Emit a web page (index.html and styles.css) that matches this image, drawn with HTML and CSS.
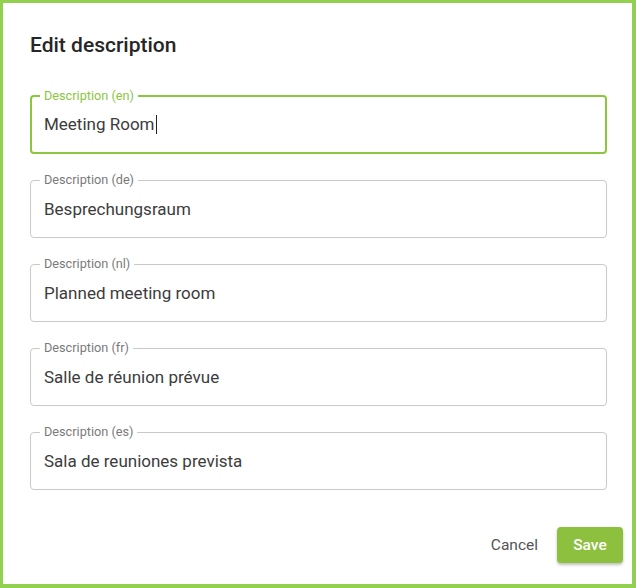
FILE: index.html
```html
<!DOCTYPE html>
<html lang="en">
<head>
<meta charset="utf-8">
<title>Edit description</title>
<link rel="stylesheet" href="styles.css">
</head>
<body>
<div class="dialog">
  <h1 class="title">Edit description</h1>
  <div class="fields">
    <fieldset class="field focused">
      <legend>Description (en)</legend>
      <div class="value">Meeting Room<span class="caret"></span></div>
    </fieldset>
    <fieldset class="field">
      <legend>Description (de)</legend>
      <div class="value">Besprechungsraum</div>
    </fieldset>
    <fieldset class="field">
      <legend>Description (nl)</legend>
      <div class="value">Planned meeting room</div>
    </fieldset>
    <fieldset class="field">
      <legend>Description (fr)</legend>
      <div class="value">Salle de réunion prévue</div>
    </fieldset>
    <fieldset class="field">
      <legend>Description (es)</legend>
      <div class="value">Sala de reuniones prevista</div>
    </fieldset>
  </div>
  <div class="actions">
    <button class="btn cancel" type="button">Cancel</button>
    <button class="btn save" type="button">Save</button>
  </div>
</div>
</body>
</html>
```

FILE: styles.css
```css
html, body {
  margin: 0;
  padding: 0;
  background: #fff;
}

.dialog {
  box-sizing: border-box;
  width: 636px;
  height: 588px;
  border-style: solid;
  border-color: #92d050;
  border-width: 3px 4px 4px 3px;
  padding: 28px 9px 0 27px;
  font-family: Roboto, "Liberation Sans", sans-serif;
  background: #fff;
}

.title {
  margin: 0 0 30px;
  font-size: 21px;
  line-height: 28px;
  font-weight: 500;
  color: #262626;
}

.fields {
  display: flex;
  flex-direction: column;
  gap: 19px;
  margin-right: 16px;
}

.field {
  margin: 0;
  min-width: 0;
  height: 65px;
  box-sizing: border-box;
  border: 1px solid #c9c9c9;
  border-radius: 4px;
  padding: 0 9px 6px;
}

.field legend {
  padding: 0 4px;
  margin-left: 0;
  font-size: 12.7px;
  line-height: 14px;
  color: #7a7a7a;
}

.field .value {
  height: 44px;
  display: flex;
  align-items: center;
  padding: 0 4px;
  font-size: 17px;
  color: #3c3c3c;
  white-space: nowrap;
}

.field.focused {
  border: 2px solid #8cc63f;
  padding: 0 8px 5px;
}

.field.focused legend {
  color: #8cc63f;
}

.field.focused .value {
  margin-top: -1px;
}

.caret {
  display: inline-block;
  width: 1px;
  height: 19px;
  background: #222;
  margin-left: 1px;
}

.actions {
  display: flex;
  justify-content: flex-end;
  align-items: center;
  gap: 8px;
  margin-top: 37px;
}

.btn {
  font-family: Roboto, "Liberation Sans", sans-serif;
  font-size: 15.5px;
  border: none;
  border-radius: 4px;
  height: 36px;
  cursor: pointer;
}

.cancel {
  background: transparent;
  color: #555;
  padding: 0 11px;
}

.save {
  background: #8dc03f;
  color: #fff;
  font-weight: 500;
  padding: 0 14px;
  width: 66px;
  box-shadow: 0 2px 3px rgba(0, 0, 0, 0.25);
}
```
